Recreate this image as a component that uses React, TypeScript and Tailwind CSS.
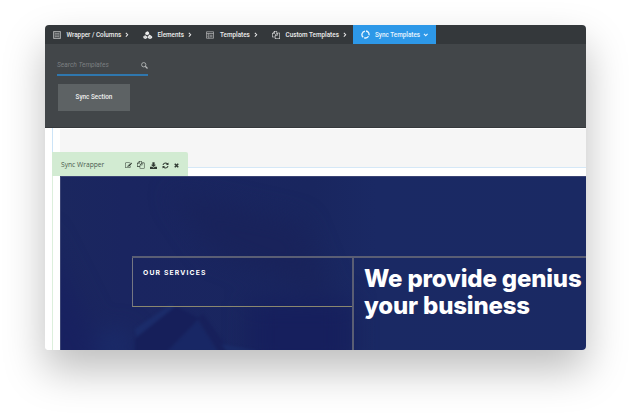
import React from "react";

type IconProps = { className?: string };

const RowsIcon = ({ className }: IconProps) => (
  <svg viewBox="0 0 16 16" fill="none" stroke="currentColor" strokeWidth="1.500" className={className}>
    <path d="M1 1h14v14H1zM4 4.500h8M4 8h8M4 11.500h8" />
    <path d="M3.500 1v14M12.500 1v14" strokeWidth=".8" />
  </svg>
);

const CubesIcon = ({ className }: IconProps) => (
  <svg viewBox="0 0 18 16" fill="currentColor" className={className}>
    <path d="m4 3.500 4-3 3 1.500 1 4-4 2.500-4-2z" />
    <path d="M.3 10.500 4 8.300l4 2.500v3L4 16 .3 13.800z" />
    <path d="m9 11 3.500-4 5.300 4v2.800L13.500 16 9 13.800z" />
    <path d="m1.500 11 2.700 1.500 2.500-1.200M10.500 11.300l2.800 1.500 2.700-1.300" fill="none" stroke="#34383b" strokeWidth=".5" />
  </svg>
);

const LayoutIcon = ({ className }: IconProps) => (
  <svg viewBox="0 0 16 16" fill="none" stroke="currentColor" strokeWidth="1.300" className={className}>
    <path d="M1 1.500h14v13H1zM1 5h14M5.500 5v9.500M3 8h1.500M3 11h1.500M7.500 8.500H13M7.500 11.500H13" />
  </svg>
);

const CopyIcon = ({ className }: IconProps) => (
  <svg viewBox="0 0 1792 1792" fill="currentColor" className={className}>
    <path d="M1696 384q40 0 68 28t28 68v1216q0 40-28 68t-68 28h-960q-40 0-68-28t-28-68v-288h-544q-40 0-68-28t-28-68v-672q0-40 20-88t48-76l408-408q28-28 76-48t88-20h416q40 0 68 28t28 68v328q68-40 128-40h416zm-544 213l-299 299h299v-299zm-640-384l-299 299h299v-299zm196 647l316-316v-416h-384v416q0 40-28 68t-68 28h-416v640h512v-256q0-40 20-88t48-76zm956 804v-1152h-384v416q0 40-28 68t-68 28h-416v640h896z" />
  </svg>
);

const SyncRingIcon = ({ className }: IconProps) => (
  <svg viewBox="0 0 18 18" fill="none" stroke="currentColor" strokeWidth="2.700" className={className}>
    <path d="M10 2A7 7 0 0 1 15.900 10.500M15 12.500A7 7 0 0 1 6.500 15.500M4.500 14.500A7 7 0 0 1 8 2.100" />
  </svg>
);

const EditIcon = ({ className }: IconProps) => (
  <svg viewBox="0 0 1792 1792" fill="currentColor" className={className}>
    <path d="M888 1184l116-116-152-152-116 116v56h96v96h56zm440-720q-16-16-33 1l-350 350q-17 17-1 33t33-1l350-350q17-17 1-33zm80 594v190q0 119-84.500 203.500t-203.500 84.500h-832q-119 0-203.500-84.500t-84.500-203.500v-832q0-119 84.500-203.500t203.500-84.500h832q63 0 117 25 15 7 18 23 3 17-9 29l-49 49q-14 14-32 8-23-6-45-6h-832q-66 0-113 47t-47 113v832q0 66 47 113t113 47h832q66 0 113-47t47-113v-126q0-13 9-22l64-64q15-15 35-7t20 29zm-96-738l288 288-672 672h-288v-288zm444 132l-92 92-288-288 92-92q28-28 68-28t68 28l152 152q28 28 28 68t-28 68z" />
  </svg>
);

const DownloadIcon = ({ className }: IconProps) => (
  <svg viewBox="0 0 16 16" fill="currentColor" className={className}>
    <path d="M5.500.500h5V6H14l-6 5.500L2 6h3.500zM0 11h5l3 2 3-2h5v5H0z" />
  </svg>
);

const RefreshIcon = ({ className }: IconProps) => (
  <svg viewBox="0 0 1792 1792" fill="currentColor" className={className}>
    <path d="M1639 1056q0 5-1 7-64 268-268 434.500t-478 166.500q-146 0-282.500-55t-243.500-157l-129 129q-19 19-45 19t-45-19-19-45v-448q0-26 19-45t45-19h448q26 0 45 19t19 45-19 45l-137 137q71 66 161 102t187 36q134 0 250-65t186-179q11-17 53-117 8-23 30-23h192q13 0 22.500 9.500t9.500 22.500zm25-800v448q0 26-19 45t-45 19h-448q-26 0-45-19t-19-45 19-45l138-138q-148-137-349-137-134 0-250 65t-186 179q-11 17-53 117-8 23-30 23h-199q-13 0-22.500-9.500t-9.500-22.500v-7q65-268 270-434.500t480-166.500q146 0 284 55.500t245 156.500l130-129q19-19 45-19t45 19 19 45z" />
  </svg>
);

const CloseIcon = ({ className }: IconProps) => (
  <svg viewBox="0 0 10 10" stroke="currentColor" strokeWidth="3" className={className}>
    <path d="m1.500 1.500 7 7M8.500 1.500l-7 7" />
  </svg>
);

const Chevron = ({ className }: IconProps) => (
  <svg viewBox="0 0 6 6" fill="none" stroke="currentColor" strokeWidth="1.100" className={className}>
    <path d="m2 1 2 2-2 2" />
  </svg>
);

const SearchIcon = ({ className }: IconProps) => (
  <svg viewBox="0 0 14 14" fill="none" stroke="currentColor" className={className}>
    <circle cx="5.500" cy="5.500" r="4.300" strokeWidth="1.700" />
    <path d="m8.500 8.500 4.500 4.500" strokeWidth="2.600" />
  </svg>
);

const Backdrop = () => (
  <svg viewBox="0 0 526 174" preserveAspectRatio="none" className="absolute inset-0 size-full">
    <defs>
      <linearGradient id="base" x1="0" y1="0" x2="1" y2="0">
        <stop offset="0" stopColor="#1b275f" />
        <stop offset=".12" stopColor="#1a2560" />
        <stop offset=".48" stopColor="#19265f" />
        <stop offset=".6" stopColor="#1a2964" />
        <stop offset="1" stopColor="#1a2963" />
      </linearGradient>
      <filter id="soft" x="-50%" y="-50%" width="200%" height="200%" colorInterpolationFilters="sRGB">
        <feGaussianBlur stdDeviation="12" />
      </filter>
      <filter id="edge" x="-20%" y="-20%" width="140%" height="140%" colorInterpolationFilters="sRGB">
        <feGaussianBlur stdDeviation="1.800" />
      </filter>
    </defs>
    <rect width="526" height="174" fill="url(#base)" />
    <g filter="url(#soft)">
      <path d="M-20 50 25 140 45 200H-20z" fill="#182160" />
      <path d="M110 15 240 45 270 120 150 75z" fill="#19235b" />
      <path d="M190 125h100v70H190z" fill="#161f5d" />
      <path d="M40 155h28v30H34z" fill="#1a2b6a" />
    </g>
    <g filter="url(#edge)">
      <path d="M74 153 110 128l4 3-38 30z" fill="#1b2c6a" />
      <path d="m74 163 41-33 23 12-31 32v10H74z" fill="#161f5a" />
      <path d="m107 176 30-32 20 32z" fill="#182765" />
      <path d="m137 142 5-5 28 39h-12z" fill="#17205b" />
      <path d="m160 168 38 7h-32z" fill="#1a2b68" />
    </g>
  </svg>
);

type MenuItemProps = { label: string; className: string; children: React.ReactNode };

function MenuItem({ label, className, children }: MenuItemProps) {
  return (
    <div className={`flex h-full shrink-0 items-center whitespace-nowrap ${className}`}>
      {children}
      <span className="pt-[2px]">{label}</span>
      <Chevron className="ml-[3px] size-[5.500px]" />
    </div>
  );
}

export default function App() {
  return (
    <div className="h-[415px] w-[631px] overflow-hidden bg-white px-[45px] pt-[25px] font-['Roboto',sans-serif]">
      <div className="h-[325px] w-[541px] rounded-[4px] shadow-[0_20px_42px_rgba(0,0,0,0.26)]">
        <div className="flex h-full flex-col overflow-hidden rounded-[4px] bg-white">
          <nav className="flex h-[19px] shrink-0 bg-[#34383b] text-[6.350px] font-medium text-[#eeeeee]">
            <MenuItem label="Wrapper / Columns" className="w-[98px] pl-[8px]">
              <RowsIcon className="mr-[5.500px] size-[8px] opacity-75" />
            </MenuItem>
            <MenuItem label="Elements" className="w-[63px]">
              <CubesIcon className="mr-[5px] h-[8px] w-[9.500px]" />
            </MenuItem>
            <MenuItem label="Templates" className="w-[66px]">
              <LayoutIcon className="mr-[6px] size-[8px] opacity-75" />
            </MenuItem>
            <MenuItem label="Custom Templates" className="w-[81px]">
              <CopyIcon className="mr-[5.500px] size-[8px]" />
            </MenuItem>
            <MenuItem label="Sync Templates" className="w-[83px] bg-[#2d98e8] pl-[8px] text-[#eaf6ff] [&>svg:last-child]:rotate-90">
              <SyncRingIcon className="mr-[5px] size-[9px]" />
            </MenuItem>
          </nav>

          <section className="h-[84px] shrink-0 border-b border-[#36393c] bg-[#424649] pt-[13px] pl-[12px]">
            <div className="flex h-[19px] w-[91px] items-center justify-between border-b-2 border-[#2f77ae]">
              <span className="pb-[1px] text-[6.700px] text-[#7b7f81] italic">Search Templates</span>
              <SearchIcon className="mb-[1px] size-[7px] text-[#b8babb]" />
            </div>
            <button className="mt-[8px] ml-[1px] flex h-[27px] w-[72px] items-center justify-center bg-[#5d6264] text-[6.350px] font-medium text-[#f0f0f0]">
              Sync Section
            </button>
          </section>

          <main className="relative flex min-h-0 flex-1">
            <div className="flex w-[15px] shrink-0 flex-col pl-[7px]">
              <div className="h-[24px] border-l border-[#cce4f7]" />
              <div className="flex-1 border-l border-[#dcefdc]" />
            </div>
            <div className="flex min-w-0 flex-1 flex-col">
              <div className="h-[40px] shrink-0 border-t border-b border-t-white border-b-[#d5e8f7] bg-[#f6f6f6]" />
              <div className="h-[8px] shrink-0" />
              <div className="relative flex-1 overflow-hidden border-t border-l border-[#3b4474]">
                <Backdrop />
                <div className="relative flex h-full flex-col pt-[79px] pl-[71px]">
                  <div className="flex flex-1 border-t-2 border-[#5a5e74]">
                    <div className="h-[49px] w-[220px] shrink-0 border-b border-l border-b-[#8a876f] border-l-[#757783] pt-[9px] pl-[10px]">
                      <p className="font-['Inter',sans-serif] text-[6.800px] leading-[11px] font-bold tracking-[1.150px] whitespace-nowrap text-white">
                        OUR SERVICES
                      </p>
                    </div>
                    <div className="flex-1 border-l-2 border-[#5a5e74] pt-[7px] pl-[10px]">
                      <h1 className="font-['Inter',sans-serif] text-[24px] leading-[27px] font-extrabold tracking-[-0.170px] whitespace-nowrap text-white">
                        We provide genius
                        <br />
                        your business
                      </h1>
                    </div>
                  </div>
                </div>
              </div>
            </div>

            {/* Wrapper toolbar, attached to the top edge of the selected block */}
            <div className="absolute top-[24px] left-[7px] flex h-[24px] w-[136px] items-center rounded-tr-[2px] bg-[#d2ebd2] pt-[2px] pl-[9px] text-[#303a32]">
              <span className="w-[64px] pt-[1px] font-['Open_Sans',sans-serif] text-[6.700px] whitespace-nowrap text-[#4b5a4e]">
                Sync Wrapper
              </span>
              <EditIcon className="size-[7px]" />
              <CopyIcon className="ml-[5px] size-[7.500px]" />
              <DownloadIcon className="ml-[5px] size-[7px]" />
              <RefreshIcon className="ml-[5px] size-[7px]" />
              <CloseIcon className="ml-[5px] size-[5px]" />
            </div>
          </main>
        </div>
      </div>
    </div>
  );
}
